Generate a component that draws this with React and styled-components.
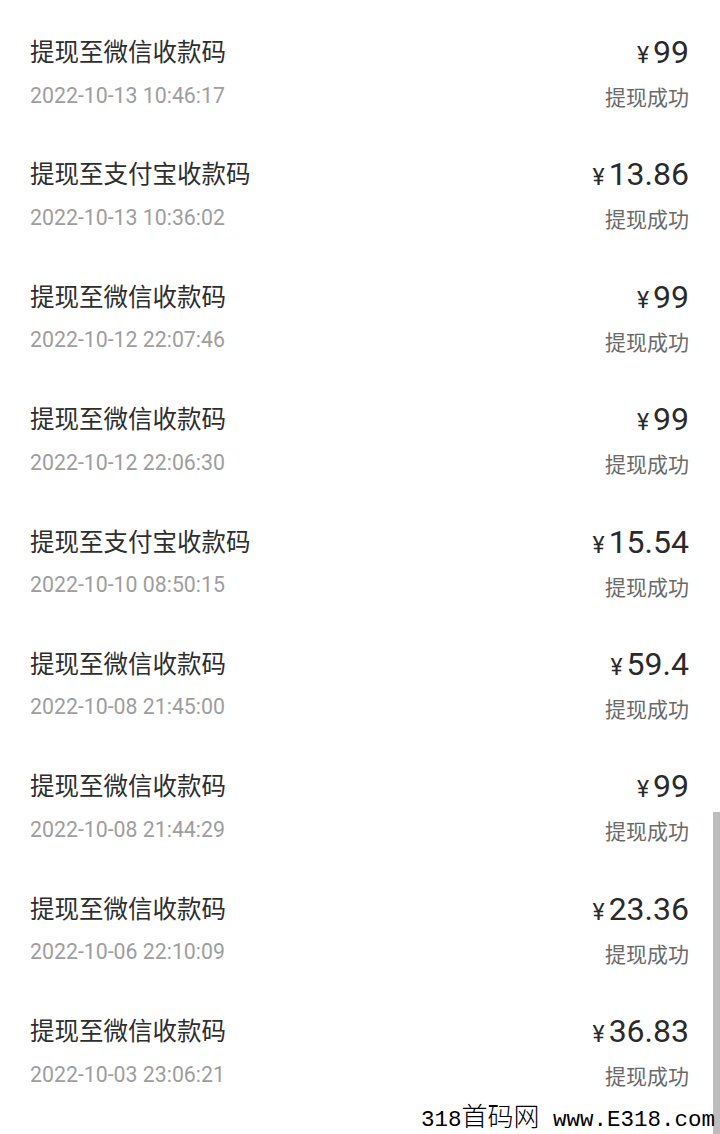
import styled, { createGlobalStyle } from 'styled-components';

const GlobalStyle = createGlobalStyle`
  html, body {
    margin: 0;
    padding: 0;
    background: #ffffff;
  }
`;

const records = [
  { to: '微信', time: '2022-10-13 10:46:17', amount: '99' },
  { to: '支付宝', time: '2022-10-13 10:36:02', amount: '13.86' },
  { to: '微信', time: '2022-10-12 22:07:46', amount: '99' },
  { to: '微信', time: '2022-10-12 22:06:30', amount: '99' },
  { to: '支付宝', time: '2022-10-10 08:50:15', amount: '15.54' },
  { to: '微信', time: '2022-10-08 21:45:00', amount: '59.4' },
  { to: '微信', time: '2022-10-08 21:44:29', amount: '99' },
  { to: '微信', time: '2022-10-06 22:10:09', amount: '23.36' },
  { to: '微信', time: '2022-10-03 23:06:21', amount: '36.83' },
];

export default function App() {
  return (
    <Screen>
      <GlobalStyle />
      <List>
        {records.map((r) => (
          <Row key={r.time}>
            <Info>
              <Title>提现至{r.to}收款码</Title>
              <Time>{r.time}</Time>
            </Info>
            <Result>
              <Amount>
                <Yen>¥</Yen>
                {r.amount}
              </Amount>
              <Status>提现成功</Status>
            </Result>
          </Row>
        ))}
      </List>
      <Scrollbar />
      <Watermark>
        318<Cjk>首码网</Cjk> www.E318.com
      </Watermark>
    </Screen>
  );
}

const Screen = styled.div`
  position: relative;
  width: 720px;
  height: 1134px;
  overflow: hidden;
  background: #ffffff;
  font-family: Roboto, "Noto Sans CJK SC", sans-serif;
`;

const List = styled.div`
  display: flex;
  flex-direction: column;
`;

const Row = styled.div`
  height: 122.4px;
  box-sizing: border-box;
  padding: 34px 31px 0 30px;

  display: flex;
  justify-content: space-between;
  align-items: flex-start;
  flex-shrink: 0;
`;

const Info = styled.div`
  display: flex;
  flex-direction: column;
`;

const Title = styled.div`
  font-family: "Noto Sans CJK SC", sans-serif;
  font-size: 24.5px;
  line-height: 34px;
  color: #2e2e2e;
`;

const Time = styled.div`
  margin-top: 13.5px;
  font-size: 21.3px;
  line-height: 28px;
  color: #9e9e9e;
`;

const Result = styled.div`
  margin-top: 1px;
  display: flex;
  flex-direction: column;
  align-items: flex-end;
`;

const Amount = styled.div`
  font-size: 32px;
  line-height: 34px;
  color: #2a2a2a;
`;

const Yen = styled.span`
  font-size: 23px;
  margin-right: 4px;
`;

const Status = styled.div`
  margin-top: 9px;
  font-family: "Noto Sans CJK SC", sans-serif;
  font-size: 21px;
  line-height: 28px;
  color: #6a6a6a;
`;

const Scrollbar = styled.div`
  position: absolute;
  right: 0;
  top: 812px;
  bottom: 0;
  width: 7px;
  background: #bdbdbd;
`;

const Watermark = styled.div`
  position: absolute;
  right: 5px;
  bottom: -1px;
  font-family: "Liberation Mono", monospace;
  font-size: 22.5px;
  line-height: 30px;
  color: #000000;
  white-space: pre;
`;

const Cjk = styled.span`
  font-family: "Noto Sans CJK SC", sans-serif;
  font-size: 26px;
  font-weight: 300;
`;
